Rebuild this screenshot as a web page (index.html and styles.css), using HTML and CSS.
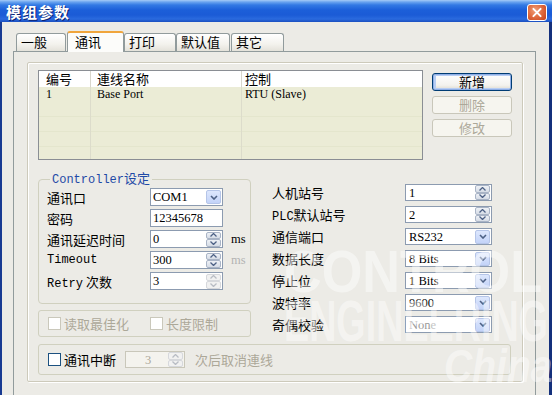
FILE: index.html
```html
<!DOCTYPE html>
<html lang="zh">
<head>
<meta charset="utf-8">
<title>模组参数</title>
<link rel="stylesheet" href="styles.css">
</head>
<body>
<div class="window">
  <div class="titlebar">
    <span class="title">模组参数</span>
    <span class="close">
      <svg width="20" height="17" viewBox="0 0 20 17"><path d="M6 4.5 L14 12.5 M14 4.5 L6 12.5" stroke="#fff" stroke-width="2.2" stroke-linecap="round"/></svg>
    </span>
  </div>
  <div class="client">
    <div class="tabs">
      <div class="tab t1">一般</div>
      <div class="tab t2 active">通讯</div>
      <div class="tab t3">打印</div>
      <div class="tab t4">默认值</div>
      <div class="tab t5">其它</div>
    </div>
    <div class="panel">
      <div class="frame">
        <div class="top">
          <div class="list">
            <div class="lrow head"><span class="c1">编号</span><span class="c2">連线名称</span><span class="c3">控制</span></div>
            <div class="lrow item"><span class="c1">1</span><span class="c2">Base Port</span><span class="c3">RTU (Slave)</span></div>
            <div class="lrow fill"><span class="c1"></span><span class="c2"></span><span class="c3"></span></div>
          </div>
          <div class="btns">
            <button class="btn default">新增</button>
            <button class="btn" disabled>删除</button>
            <button class="btn" disabled>修改</button>
          </div>
        </div>
        <div class="mid">
          <div class="leftcol">
            <fieldset class="group">
              <legend><span class="lat">Controller</span>设定</legend>
              <div class="rows">
                <div class="frow"><span class="flabel">通讯口</span><span class="field"><span class="val">COM1</span><span class="drop"><svg width="8" height="5" viewBox="0 0 8 5"><path d="M1 1 L4 4 L7 1" fill="none" stroke="#4d6185" stroke-width="1.6"/></svg></span></span></div>
                <div class="frow"><span class="flabel">密码</span><span class="field"><span class="val">12345678</span></span></div>
                <div class="frow"><span class="flabel">通讯延迟时间</span><span class="field"><span class="val">0</span><span class="spin"><span class="sb"><svg width="7" height="4" viewBox="0 0 7 4"><path d="M0.5 3.5 L3.5 0.5 L6.5 3.5" fill="none" stroke="#4d6185" stroke-width="1.3"/></svg></span><span class="sb"><svg width="7" height="4" viewBox="0 0 7 4"><path d="M0.5 0.5 L3.5 3.5 L6.5 0.5" fill="none" stroke="#4d6185" stroke-width="1.3"/></svg></span></span></span><span class="unit">ms</span></div>
                <div class="frow"><span class="flabel lat">Timeout</span><span class="field"><span class="val">300</span><span class="spin"><span class="sb"><svg width="7" height="4" viewBox="0 0 7 4"><path d="M0.5 3.5 L3.5 0.5 L6.5 3.5" fill="none" stroke="#4d6185" stroke-width="1.3"/></svg></span><span class="sb"><svg width="7" height="4" viewBox="0 0 7 4"><path d="M0.5 0.5 L3.5 3.5 L6.5 0.5" fill="none" stroke="#4d6185" stroke-width="1.3"/></svg></span></span></span><span class="unit dim">ms</span></div>
                <div class="frow"><span class="flabel"><span class="lat">Retry</span> 次数</span><span class="field"><span class="val">3</span><span class="spin off"><span class="sb"><svg width="7" height="4" viewBox="0 0 7 4"><path d="M0.5 3.5 L3.5 0.5 L6.5 3.5" fill="none" stroke="#b8bcc4" stroke-width="1.3"/></svg></span><span class="sb"><svg width="7" height="4" viewBox="0 0 7 4"><path d="M0.5 0.5 L3.5 3.5 L6.5 0.5" fill="none" stroke="#b8bcc4" stroke-width="1.3"/></svg></span></span></span></div>
              </div>
            </fieldset>
            <div class="box chkrow">
              <span class="chk off"><span class="cb"></span>读取最佳化</span>
              <span class="chk off"><span class="cb"></span>长度限制</span>
            </div>
          </div>
          <div class="rightcol">
            <div class="rrow"><span class="rlabel">人机站号</span><span class="field wide"><span class="val">1</span><span class="spin"><span class="sb"><svg width="7" height="4" viewBox="0 0 7 4"><path d="M0.5 3.5 L3.5 0.5 L6.5 3.5" fill="none" stroke="#4d6185" stroke-width="1.3"/></svg></span><span class="sb"><svg width="7" height="4" viewBox="0 0 7 4"><path d="M0.5 0.5 L3.5 3.5 L6.5 0.5" fill="none" stroke="#4d6185" stroke-width="1.3"/></svg></span></span></span></div>
            <div class="rrow"><span class="rlabel"><span class="lat">PLC</span>默认站号</span><span class="field wide"><span class="val">2</span><span class="spin"><span class="sb"><svg width="7" height="4" viewBox="0 0 7 4"><path d="M0.5 3.5 L3.5 0.5 L6.5 3.5" fill="none" stroke="#4d6185" stroke-width="1.3"/></svg></span><span class="sb"><svg width="7" height="4" viewBox="0 0 7 4"><path d="M0.5 0.5 L3.5 3.5 L6.5 0.5" fill="none" stroke="#4d6185" stroke-width="1.3"/></svg></span></span></span></div>
            <div class="rrow"><span class="rlabel">通信端口</span><span class="field wide"><span class="val">RS232</span><span class="drop"><svg width="8" height="5" viewBox="0 0 8 5"><path d="M1 1 L4 4 L7 1" fill="none" stroke="#4d6185" stroke-width="1.6"/></svg></span></span></div>
            <div class="rrow"><span class="rlabel">数据长度</span><span class="field wide"><span class="val">8 Bits</span><span class="drop"><svg width="8" height="5" viewBox="0 0 8 5"><path d="M1 1 L4 4 L7 1" fill="none" stroke="#4d6185" stroke-width="1.6"/></svg></span></span></div>
            <div class="rrow"><span class="rlabel">停止位</span><span class="field wide"><span class="val">1 Bits</span><span class="drop"><svg width="8" height="5" viewBox="0 0 8 5"><path d="M1 1 L4 4 L7 1" fill="none" stroke="#4d6185" stroke-width="1.6"/></svg></span></span></div>
            <div class="rrow"><span class="rlabel">波特率</span><span class="field wide"><span class="val">9600</span><span class="drop"><svg width="8" height="5" viewBox="0 0 8 5"><path d="M1 1 L4 4 L7 1" fill="none" stroke="#4d6185" stroke-width="1.6"/></svg></span></span></div>
            <div class="rrow"><span class="rlabel">奇偶校验</span><span class="field wide"><span class="val dimv">None</span><span class="drop"><svg width="8" height="5" viewBox="0 0 8 5"><path d="M1 1 L4 4 L7 1" fill="none" stroke="#4d6185" stroke-width="1.6"/></svg></span></span></div>
          </div>
        </div>
        <div class="box bottom">
          <span class="chk"><span class="cb"></span>通讯中断</span>
          <span class="field small off"><span class="val">3</span><span class="spin off"><span class="sb"><svg width="7" height="4" viewBox="0 0 7 4"><path d="M0.5 3.5 L3.5 0.5 L6.5 3.5" fill="none" stroke="#b8bcc4" stroke-width="1.3"/></svg></span><span class="sb"><svg width="7" height="4" viewBox="0 0 7 4"><path d="M0.5 0.5 L3.5 3.5 L6.5 0.5" fill="none" stroke="#b8bcc4" stroke-width="1.3"/></svg></span></span></span>
          <span class="after">次后取消連线</span>
        </div>
      </div>
    </div>
  </div>
  <div class="watermark" aria-hidden="true">
    <span class="wm1">CONTROL</span>
    <span class="wm2">ENGINEERING</span>
    <span class="wm3">China</span>
  </div>
</div>
</body>
</html>
```

FILE: styles.css
```css
* { box-sizing: border-box; }
html, body { margin: 0; padding: 0; }
body {
  width: 552px;
  height: 395px;
  overflow: hidden;
  background: #ecebe6;
  font-family: "Noto Sans CJK SC", "Liberation Sans", sans-serif;
  font-size: 13px;
  color: #000;
}
.window {
  position: relative;
  width: 552px;
  height: 395px;
  display: flex;
  flex-direction: column;
  overflow: hidden;
  background: #ecebe6;
}
.titlebar {
  height: 22px;
  flex: none;
  display: flex;
  align-items: center;
  justify-content: space-between;
  padding: 0 5px 0 6px;
  background: linear-gradient(to bottom, #a6cbf7 0px, #6aa4ef 2px, #3279e4 5px, #1c5fd9 10px, #1b5bd6 15px, #2a6ade 19px, #1b4fc0 22px);
}
.title {
  color: #fff;
  font-weight: bold;
  font-size: 15px;
  letter-spacing: 1px;
  line-height: 1;
  text-shadow: 1px 1px 0 #0b2272;
}
.close {
  width: 20px;
  height: 17px;
  margin-top: 3px;
  border: 1px solid #fff;
  border-radius: 3px;
  background: radial-gradient(circle at 40% 35%, #f0a079 0%, #df6a3e 50%, #c3401b 100%);
  display: flex;
  align-items: center;
  justify-content: center;
}
.close svg { display: block; }
.client {
  flex: 1;
  border-left: 2px solid #183a92;
  border-right: 3px solid #14307c;
  padding: 9px 0 0 11px;
}
.tabs {
  display: flex;
  align-items: flex-end;
  height: 21px;
  margin-left: 3px;
  position: relative;
  z-index: 1;
}
.tab {
  height: 18px;
  margin-bottom: 1px;
  margin-right: 1px;
  border: 1px solid #919b9c;
  border-bottom: none;
  border-radius: 3px 3px 0 0;
  background: linear-gradient(#ffffff, #f3f2ed 60%, #e4e2da);
  padding: 0 0 0 4px;
  line-height: 16px;
  font-size: 13px;
}
.t1 { width: 50px; }
.t2 { width: 57px; margin-right: 0; }
.t3 { width: 52px; margin-right: 0; }
.t4 { width: 54px; }
.t5 { width: 53px; }
.tab.active {
  height: 21px;
  margin-bottom: 0;
  border-top: 2px solid #f0a53c;
  background: #fcfcfa;
  padding-left: 7px;
  line-height: 17px;
}
.panel {
  width: 523px;
  height: 346px;
  margin-top: -1px;
  border: 1px solid #919b9c;
  background: #ecebe6;
  padding: 10px 0 0 13px;
}
.frame {
  width: 496px;
  height: 320px;
  border: 1px solid #cdcabb;
  border-radius: 2px;
  box-shadow: inset 1px 1px 0 #fff, 1px 1px 0 #fff;
  padding: 7px 0 0 10px;
}
.top { display: flex; }
.list {
  width: 385px;
  height: 90px;
  border: 1px solid #8a8e94;
  background: #ebecd6;
  display: flex;
  flex-direction: column;
}
.lrow { display: flex; }
.lrow span { display: block; }
.c1 { width: 52px; padding-left: 7px; border-right: 1px solid #dcdccb; }
.c2 { width: 151px; padding-left: 6px; border-right: 1px solid #dcdccb; }
.c3 { flex: 1; padding-left: 3px; }
.head { height: 16px; background: #fff; line-height: 15px; }
.head .c1, .head .c2 { border-right-color: #d8d6cc; }
.item {
  height: 15px;
  line-height: 15px;
  font-family: "Liberation Serif", serif;
  font-size: 12px;
}
.fill {
  flex: 1;
  background: repeating-linear-gradient(to bottom, #ebecd6 0, #ebecd6 14px, #e4e6cd 14px, #e4e6cd 15px);
}
.btns {
  margin-left: 9px;
  padding-top: 3px;
  display: flex;
  flex-direction: column;
  gap: 5px;
}
.btn {
  width: 80px;
  height: 18px;
  padding: 0;
  font-family: "Noto Sans CJK SC", sans-serif;
  font-size: 13px;
  line-height: 16px;
  color: #000;
  border: 1px solid #003c74;
  border-radius: 3px;
  background: linear-gradient(#ffffff, #f3f2ee 70%, #dcd8cc);
}
.btn.default { box-shadow: inset 0 0 0 1px #8eaee6, inset 1px 0 0 2px #b7cdf3; }
.btn:disabled {
  border-color: #c9c7ba;
  color: #aca899;
  background: #f6f5ef;
}
.mid { display: flex; margin-top: 12px; }
.leftcol { width: 213px; display: flex; flex-direction: column; }
.group {
  margin: 0;
  padding: 2px 8px 13px 8px;
  border: 1px solid #d0d0bf;
  border-radius: 4px;
  min-width: 0;
}
.group legend {
  padding: 0 2px;
  margin-left: 3px;
  color: #1f4aa6;
  font-size: 13px;
  line-height: 12px;
}
.lat { font-family: "Liberation Mono", monospace; font-size: 12px; }
.rows { display: flex; flex-direction: column; gap: 3px; }
.frow { display: flex; align-items: center; height: 18px; }
.flabel { width: 103px; flex: none; white-space: nowrap; }
.field {
  width: 73px;
  height: 18px;
  flex: none;
  border: 1px solid #8c9bb0;
  background: #fff;
  display: flex;
  align-items: center;
  padding: 0 1px 0 2px;
}
.field.wide { width: 87px; height: 17px; padding-left: 3px; }
.val {
  font-family: "Liberation Serif", serif;
  font-size: 12.5px;
  line-height: 14px;
}
.dimv { color: #9a9a9a; }
.drop {
  margin-left: auto;
  width: 15px;
  height: 14px;
  border: 1px solid #b5c5e8;
  border-radius: 2px;
  background: linear-gradient(#dde7fd, #c3d3f8);
  display: flex;
  align-items: center;
  justify-content: center;
}
.drop svg, .sb svg { display: block; }
.spin {
  margin-left: auto;
  width: 15px;
  height: 15px;
  display: flex;
  flex-direction: column;
}
.sb {
  flex: 1;
  border: 1px solid #a9b4c6;
  border-radius: 2px;
  background: linear-gradient(#eef1f6, #d6dce6);
  display: flex;
  align-items: center;
  justify-content: center;
}
.spin.off .sb { border-color: #d6d8dc; background: #f1f1f1; }
.unit {
  margin-left: 8px;
  font-family: "Liberation Serif", serif;
  font-size: 12.5px;
}
.unit.dim { color: #b3b3b3; }
.box {
  border: 1px solid #d0d0bf;
  border-radius: 3px;
  display: flex;
  align-items: center;
  padding-left: 9px;
}
.chkrow { margin-top: 6px; height: 27px; }
.chk { display: flex; align-items: center; gap: 3px; }
.chkrow .chk:first-child { width: 102px; }
.cb {
  width: 13px;
  height: 13px;
  border: 1px solid #1c5180;
  background: #fff;
}
.chk.off { color: #aca899; }
.chk.off .cb { border-color: #cac8bb; }
.rightcol {
  margin-left: 21px;
  padding-top: 12px;
  display: flex;
  flex-direction: column;
  gap: 5px;
}
.rrow { display: flex; align-items: center; height: 17px; }
.rlabel { width: 133px; flex: none; white-space: nowrap; }
.bottom { margin-top: 7px; width: 473px; height: 31px; }
.field.small {
  width: 60px;
  height: 17px;
  margin-left: 9px;
  border-color: #c9c7ba;
  background: #f4f3ee;
}
.field.small .val { color: #aca899; width: 40px; text-align: center; }
.after { margin-left: 10px; color: #aca899; }
.watermark {
  position: absolute;
  left: 284px;
  top: 246px;
  width: 270px;
  font-family: "Liberation Sans", sans-serif;
  font-weight: bold;
  color: rgba(255, 255, 255, 0.45);
  pointer-events: none;
}
.watermark span { display: block; transform-origin: left top; white-space: nowrap; }
.wm1 { font-size: 60px; line-height: 52px; transform: scaleX(0.87); }
.wm2 { font-size: 58px; line-height: 46px; transform: scaleX(0.65); }
.wm3 { font-size: 46px; line-height: 44px; font-style: italic; margin-left: 160px; transform: scaleX(0.85); }
```
